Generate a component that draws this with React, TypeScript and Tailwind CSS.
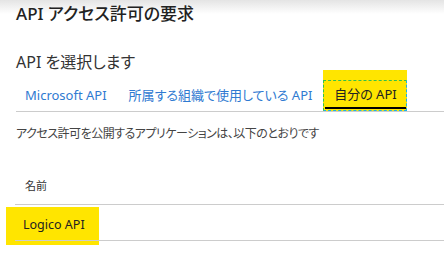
import React from "react";

export default function App() {
  const font = {
    fontFamily: '"Noto Sans", "Noto Sans CJK JP", sans-serif',
  };
  return (
    <div
      className="relative w-[444px] h-[258px] overflow-hidden bg-white text-[#222] [font-feature-settings:'palt']"
      style={font}
    >
      <div className="absolute left-0 right-0 top-0 h-[14px] bg-gradient-to-b from-[#e4e4e4] to-white" />
      <div className="relative pl-[16px] pt-[1px]">
        <div className="h-[26px] text-[17px] leading-[26px] font-medium text-[#222]">
          API アクセス許可の要求
        </div>
        <div className="mt-[23px] h-[24px] text-[16px] leading-[24px] text-[#333]">
          API を選択します
        </div>
        <div className="mt-[-4px] flex h-[42px] items-stretch border-b border-[#cccccc] pl-[9px] text-[13px]">
          <div className="flex items-center pt-[10px] text-[#2f7ad1]">Microsoft API</div>
          <div className="ml-[22px] flex items-center pt-[10px] text-[#2f7ad1]">
            所属する組織で使用している API
          </div>
          <div className="ml-[11px] flex w-[84px] flex-col bg-[#ffe500]">
            <div className="h-[10px]" />
            <div className="relative flex flex-1 items-center justify-center border border-dashed border-t-[#33c24a] border-l-[#33c24a] border-r-[#1ab3e6] border-b-[#1ab3e6] text-[#222]">
              <span className="mt-[-2px]">自分の API</span>
              <div className="absolute bottom-[1px] left-[1px] right-0 h-[2px] bg-black" />
            </div>
          </div>
        </div>
        <div className="mt-[14px] text-[12px] leading-[16px] tracking-[-0.5px] text-[#444]">
          アクセス許可を公開するアプリケーションは、以下のとおりです
        </div>
        <div className="mt-[37px] pl-[9px] text-[11px] leading-[14px] text-[#333]">名前</div>
      </div>
      <div className="relative ml-[15px] mt-[11px] border-t border-[#cccccc]">
        <div className="relative h-[35px]">
          <div className="absolute left-[-9px] top-[2px] h-[38px] w-[93px] bg-[#ffe500]" />
          <div className="relative pl-[8px] pt-[11px] text-[12.5px] leading-[18px] text-[#222]">
            Logico API
          </div>
        </div>
        <div className="relative h-px bg-[#cccccc]" />
      </div>
    </div>
  );
}
